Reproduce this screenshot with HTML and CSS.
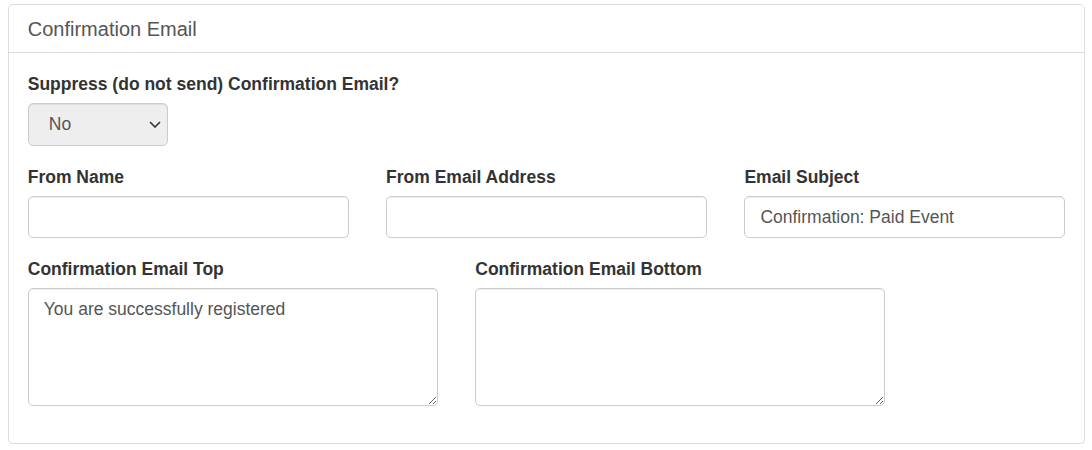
FILE: index.html
```html
<!DOCTYPE html>
<html lang="en">
<head>
<meta charset="utf-8">
<title>Confirmation Email</title>
<link rel="stylesheet" href="styles.css">
</head>
<body>
<div class="panel">
  <div class="panel-heading">
    <h3 class="panel-title">Confirmation Email</h3>
  </div>
  <div class="panel-body">
    <div class="form-group">
      <label class="label" for="suppress">Suppress (do not send) Confirmation Email?</label>
      <select id="suppress" class="control select">
        <option>No</option>
        <option>Yes</option>
      </select>
    </div>
    <div class="row row-3">
      <div class="form-group">
        <label class="label" for="fromName">From Name</label>
        <input id="fromName" class="control" type="text" value="">
      </div>
      <div class="form-group">
        <label class="label" for="fromEmail">From Email Address</label>
        <input id="fromEmail" class="control" type="text" value="">
      </div>
      <div class="form-group">
        <label class="label" for="subject">Email Subject</label>
        <input id="subject" class="control" type="text" value="Confirmation: Paid Event">
      </div>
    </div>
    <div class="row row-2">
      <div class="form-group">
        <label class="label" for="top">Confirmation Email Top</label>
        <textarea id="top" class="control area" rows="4">You are successfully registered</textarea>
      </div>
      <div class="form-group">
        <label class="label" for="bottom">Confirmation Email Bottom</label>
        <textarea id="bottom" class="control area" rows="4"></textarea>
      </div>
    </div>
  </div>
</div>
</body>
</html>
```

FILE: styles.css
```css
* {
  box-sizing: border-box;
}

html, body {
  background: #fff;
}

body {
  margin: 4px 7px 0 8px;
  font-family: "Liberation Sans", Arial, sans-serif;
  font-size: 17.5px;
  line-height: 25px;
  color: #333;
}

.panel {
  border: 1px solid #ddd;
  border-radius: 5px;
  background: #fff;
  box-shadow: 0 1px 1px rgba(0, 0, 0, 0.05);
}

.panel-heading {
  padding: 12.5px 18.75px;
  border-bottom: 1px solid #ddd;
}

.panel-title {
  margin: 0;
  font-size: 20px;
  font-weight: normal;
  line-height: 22px;
  color: #555;
}

.panel-body {
  padding: 19px 18.75px 18.75px 18.75px;
}

.form-group {
  margin-bottom: 18.75px;
}

.label {
  display: block;
  font-weight: bold;
  line-height: 25px;
  margin-bottom: 6.25px;
  color: #333;
}

.row {
  display: grid;
  column-gap: 37.5px;
}

.row-3 {
  grid-template-columns: 1fr 1fr 1fr;
}

.row-2 {
  grid-template-columns: 410px 410px;
}

.control {
  display: block;
  width: 100%;
  height: 42.5px;
  padding: 7.5px 15px;
  font-family: inherit;
  font-size: 17.5px;
  line-height: 25px;
  color: #555;
  background: #fff;
  border: 1px solid #ccc;
  border-radius: 5px;
  box-shadow: inset 0 1px 1px rgba(0, 0, 0, 0.075);
  margin: 0;
}

.select {
  width: 140px;
  padding-left: 20px;
  background-color: #eee;
  -webkit-appearance: none;
  appearance: none;
  background-image: url("data:image/svg+xml;utf8,<svg xmlns='http://www.w3.org/2000/svg' width='12' height='7' viewBox='0 0 12 7'><path d='M1 1 L6 6 L11 1' fill='none' stroke='%23333' stroke-width='1.6'/></svg>");
  background-repeat: no-repeat;
  background-position: right 6px center;
  background-size: 12px 7px;
}

.area {
  height: 117.5px;
  padding-top: 7.5px;
  resize: vertical;
}

.row-2 .form-group {
  margin-bottom: 18.75px;
}
```
